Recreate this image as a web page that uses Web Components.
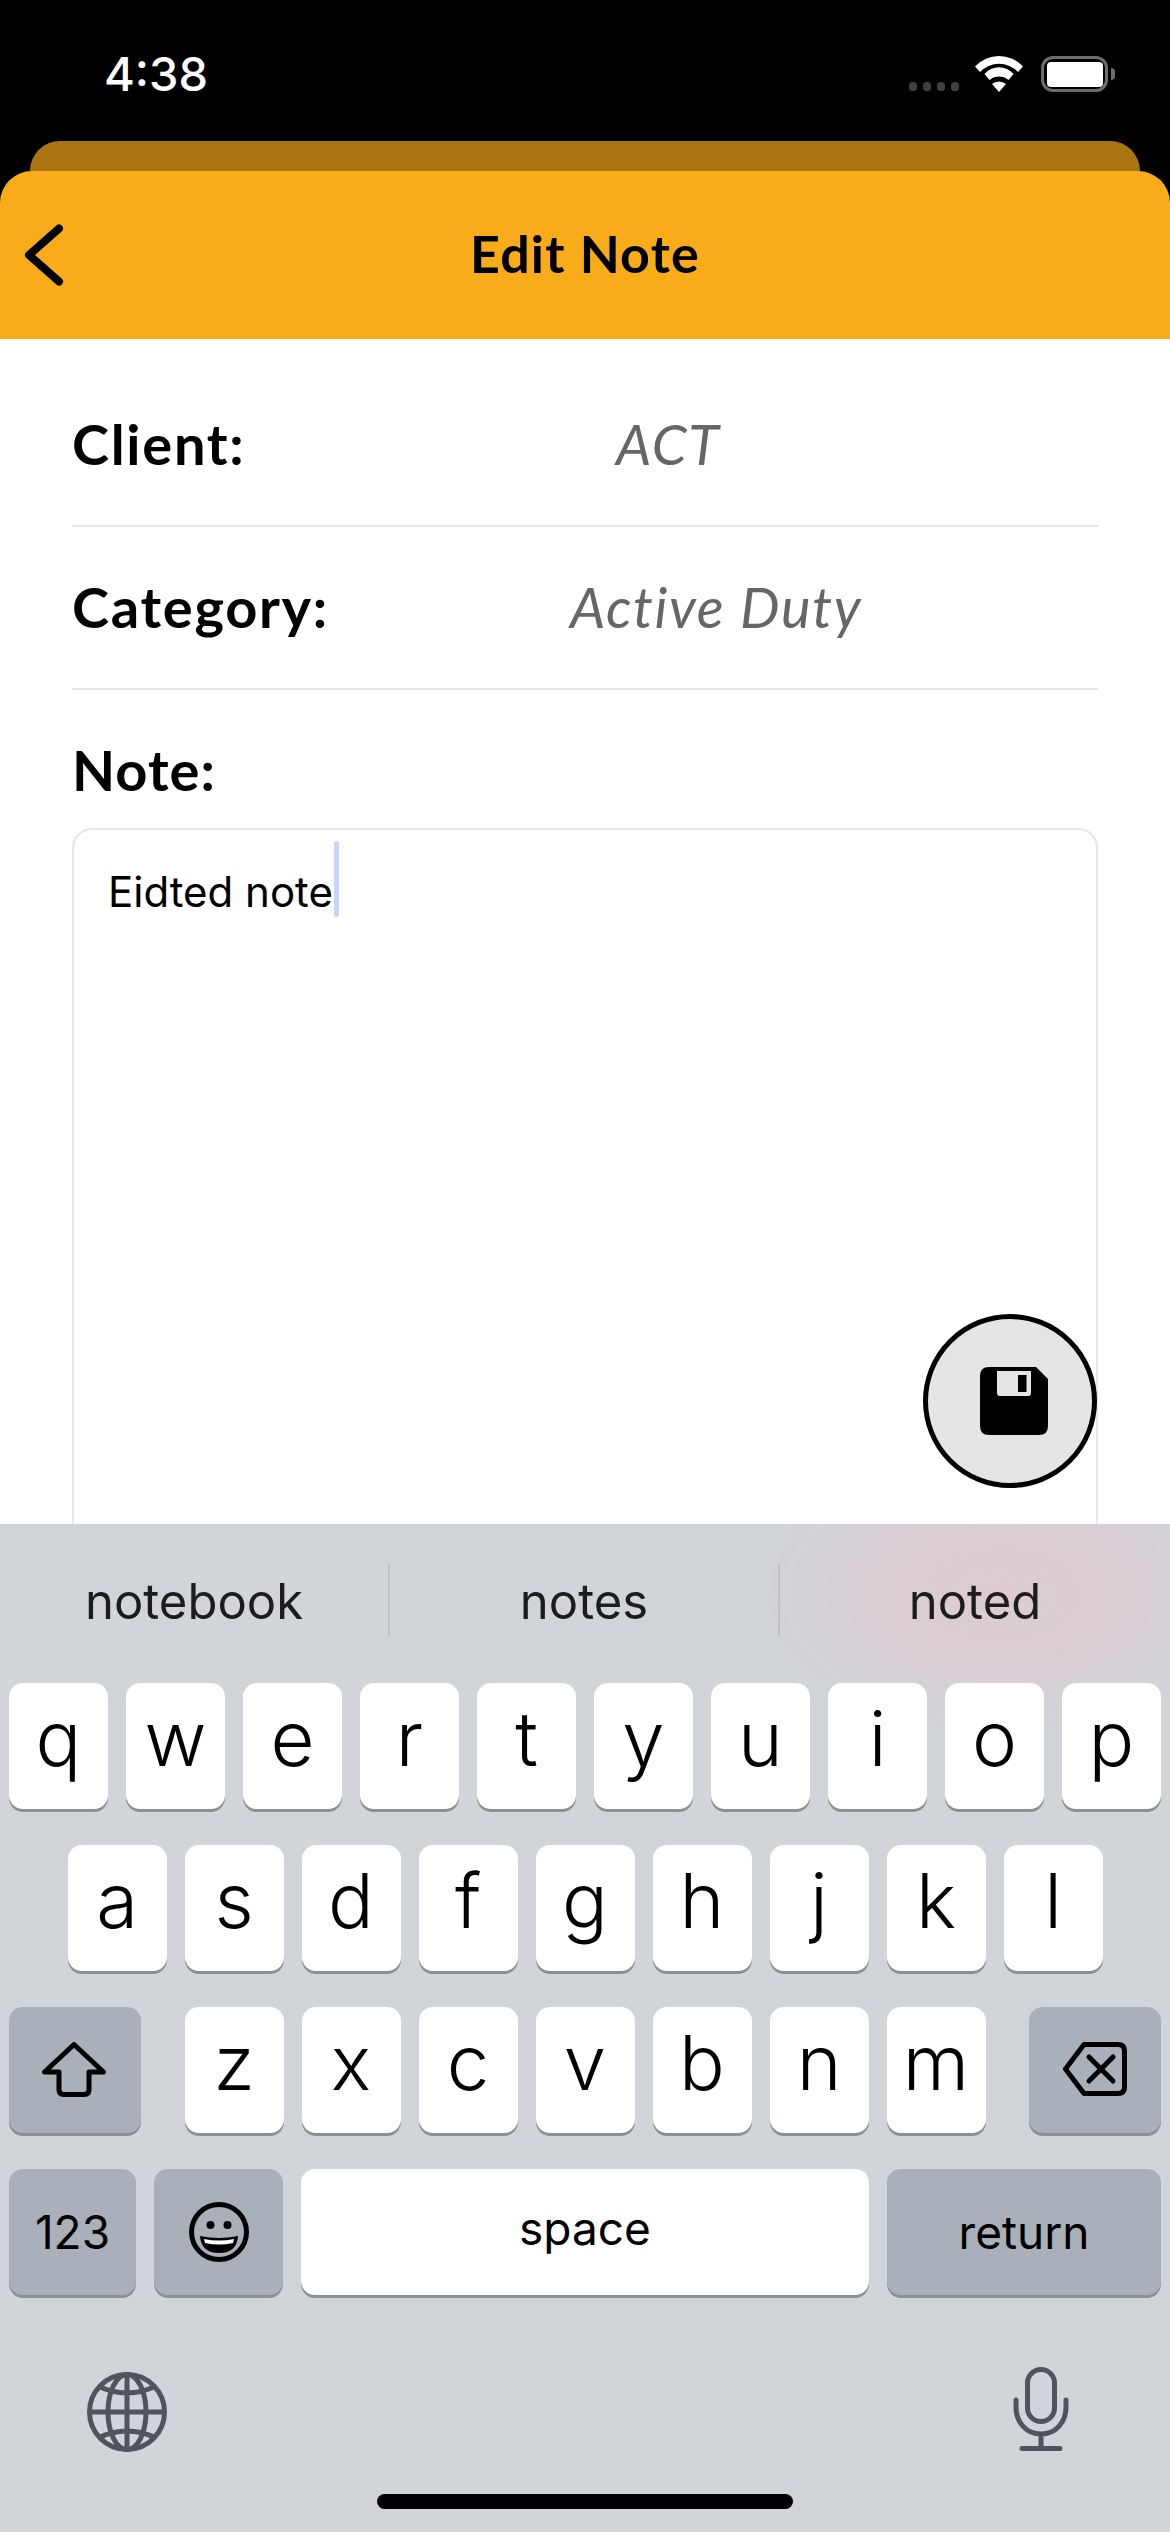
<!DOCTYPE html>
<html lang="en">
<head>
<meta charset="utf-8">
<title>Edit Note</title>
<style>
html,body{margin:0;padding:0;background:#000}
body{width:1170px;height:2532px;overflow:hidden}
</style>
</head>
<body>
<note-app>
  <ios-status slot="status" time="4:38"></ios-status>
  <sheet-header slot="header" title="Edit Note"></sheet-header>
  <note-form slot="form">
    <note-row label="Client:" value="ACT" style="--value-x:544px"></note-row>
    <note-row label="Category:" value="Active Duty" style="--value-x:498px"></note-row>
    <note-box label="Note:" text="Eidted note"></note-box>
    <save-fab></save-fab>
  </note-form>
  <ios-keyboard slot="keyboard"></ios-keyboard>
</note-app>
<script>
function def(name, css, html, init){
  customElements.define(name, class extends HTMLElement{
    constructor(){super();this.attachShadow({mode:'open'}).innerHTML='<style>'+css+'</style>'+html;}
    connectedCallback(){if(init)init(this,this.shadowRoot);}
  });
}
var UI='"Lato","Noto Sans",sans-serif', KB='"Inter","Liberation Sans",sans-serif';

def('note-app',
 ':host{display:flex;flex-direction:column;width:1170px;height:2532px;background:#000;overflow:hidden}',
 '<slot name="status"></slot><slot name="header"></slot><slot name="form"></slot><slot name="keyboard"></slot>');

def('ios-status',
 ':host{display:flex;justify-content:space-between;align-items:flex-start;height:141px;box-sizing:border-box;padding:56px 55px 0 104px;color:#fff;font:500 47px/36px '+KB+'}'+
 '.r{display:flex;align-items:flex-start}'+
 '.dots{display:flex;gap:5.5px;margin:26px 16px 0 0}.dots i{width:8.5px;height:9px;border-radius:3.5px;background:#3f3f3f}'+
 'svg{display:block}.wifi{margin-right:18px}'+
 '.bat{box-sizing:border-box;width:67px;height:36px;border:3.5px solid #6c6c6c;border-radius:12px;padding:2.5px;}'+
 '.bat b{display:block;height:100%;background:#fff;border-radius:4px}'+
 '.cap{width:4px;height:12px;margin:12px 0 0 3px;background:#6c6c6c;border-radius:0 6px 6px 0}',
 '<span id="t"></span><div class="r"><div class="dots"><i></i><i></i><i></i><i></i></div>'+
 '<svg class="wifi" width="48" height="36" viewBox="0 0 48 36" fill="#fff"><path d="M0 10.5A32.7 32.7 0 0 1 48 10.5L43 16A26 26 0 0 0 5 16Z"/><path d="M9.5 18A19 19 0 0 1 38.5 18L33.5 24A15 15 0 0 0 14.5 24Z"/><path d="M17 28A11 11 0 0 1 31 28L24 36Z"/></svg>'+
 '<div class="bat"><b></b></div><div class="cap"></div></div>',
 function(h,s){s.getElementById('t').textContent=h.getAttribute('time');});

def('sheet-header',
 ':host{display:block}'+
 '.back{height:30px;margin:0 30px;background:#ab7611;border-radius:30px 30px 0 0}'+
 '.bar{position:relative;display:flex;align-items:center;justify-content:center;height:168px;box-sizing:border-box;padding-bottom:5px;background:#f8ac19;border-radius:32px 32px 0 0;font:700 52px/1 '+UI+';letter-spacing:1.2px;color:#000}'+
 'button{all:unset;position:absolute;left:24px;top:53px;display:block}svg{display:block}',
 '<div class="back"></div><div class="bar"><button aria-label="Back"><svg width="42" height="62" viewBox="0 0 42 62" fill="none" stroke="#000" stroke-width="8" stroke-linecap="round" stroke-linejoin="round"><path d="M35 4.5L5 31L35 57.5"/></svg></button><span id="t"></span></div>',
 function(h,s){s.getElementById('t').textContent=h.getAttribute('title');});

def('note-form',
 ':host{position:relative;display:flex;flex-direction:column;flex:1;min-height:0;overflow:hidden;background:#fff;padding:25px 72px 0;box-sizing:border-box}',
 '<slot></slot>');

def('note-row',
 ':host{display:flex;align-items:center;height:163px;box-sizing:border-box;border-bottom:2px solid #e6e6e6;padding-bottom:2px;color:#000}'+
 '.l{font:700 56px/1 '+UI+';letter-spacing:1.7px;width:var(--value-x)}.v{font:italic 400 56px/1 '+UI+';letter-spacing:1.6px;color:#666}',
 '<span class="l" id="l"></span><span class="v" id="v"></span>',
 function(h,s){s.getElementById('l').textContent=h.getAttribute('label');s.getElementById('v').textContent=h.getAttribute('value');});

def('note-box',
 ':host{display:flex;flex-direction:column;flex:1;min-height:0}'+
 '.l{font:700 56px/1 '+UI+';letter-spacing:1px;padding-top:52px;height:86px;color:#000;box-sizing:content-box}'+
 '.box{flex:1;border:2px solid #e6e6e6;border-bottom:0;border-radius:20px 20px 0 0;padding:11px 34px;display:block}'+
 '.line{display:flex;align-items:center;height:76px;font:400 42px/1 '+KB+';color:#000}'+
 '.line span:first-child{padding-top:26px}'+
 '.c{width:5px;height:76px;background:#c9d4fa;border-radius:2.5px;flex:none;margin-left:1px}',
 '<div class="l" id="l"></div><div class="box"><div class="line"><span id="t"></span><span class="c"></span></div></div>',
 function(h,s){s.getElementById('l').textContent=h.getAttribute('label');s.getElementById('t').textContent=h.getAttribute('text');});

def('save-fab',
 ':host{position:absolute;left:923px;top:975px;width:174px;height:174px;box-sizing:border-box;border:5px solid #000;border-radius:50%;background:#e5e5e5;display:flex;align-items:center;justify-content:center}svg{display:block;margin-left:8px}',
 '<svg width="68" height="68" viewBox="0 0 68 68" role="img" aria-label="Save"><path fill="#000" d="M9 0H56L68 12V59Q68 68 59 68H9Q0 68 0 59V9Q0 0 9 0Z"/><path fill="#e5e5e5" d="M17 4H51V26Q51 29 48 29H20Q17 29 17 26Z"/><rect x="38" y="8" width="8.5" height="17" fill="#000"/></svg>');

def('kb-key',
 ':host{display:flex;align-items:center;justify-content:center;width:99px;height:126px;flex:none;background:#fff;border-radius:14px;box-shadow:0 3px 0 #8e8f93;color:#000;font:300 76px/1 '+KB+';box-sizing:border-box;padding-bottom:17px}'+
 ':host([kind=dark]){background:#a9b0ba}'+
 ':host([small]){font:400 46px/1 '+KB+';padding-bottom:0}',
 '<slot></slot>');

def('kb-row',
 ':host{display:flex;justify-content:center;gap:18px;height:126px}',
 '<slot></slot>');

def('ios-keyboard',
 ':host{display:flex;flex-direction:column;height:1008px;flex:none;box-sizing:border-box;background:radial-gradient(ellipse 240px 140px at 1000px 70px,#ddcbd2 0%,rgba(221,203,210,.75) 45%,rgba(209,212,217,0) 100%),#d1d4d9}'+
 '.sug{display:grid;grid-template-columns:388px 390px 392px;grid-template-rows:74px;height:74px;margin:39px 0 46px;font:400 49px/77px '+KB+';color:#1c1c1e;text-align:center}'+
 '.sug span+span{border-left:2px solid #bfc2c8;box-sizing:border-box}'+
 '.rows{display:flex;flex-direction:column;gap:36px}'+
 '.sp{justify-content:space-between;padding:0 9px}.grp{display:flex;gap:18px}'+
 '.bot{display:flex;justify-content:space-between;align-items:flex-start;padding:72px 101px 0 87px}'+
 '.home{width:416px;height:15px;border-radius:8px;background:#000;margin:42px auto 0}svg{display:block}',
 '<div class="sug"><span>notebook</span><span>notes</span><span>noted</span></div>'+
 '<div class="rows">'+
 '<kb-row>'+'qwertyuiop'.split('').map(function(c){return '<kb-key>'+c+'</kb-key>'}).join('')+'</kb-row>'+
 '<kb-row>'+'asdfghjkl'.split('').map(function(c){return '<kb-key>'+c+'</kb-key>'}).join('')+'</kb-row>'+
 '<kb-row class="sp"><kb-key kind="dark" style="width:132px;padding:0 3px 0 0"><svg style="margin-bottom:2px" width="64" height="55" viewBox="0 0 64 55" fill="none" stroke="#000" stroke-width="5" stroke-linejoin="round"><path d="M32 2.5L2.5 30H17V47.5Q17 52.5 22 52.5H42Q47 52.5 47 47.5V30H61.5Z"/></svg></kb-key>'+
 '<div class="grp">'+'zxcvbnm'.split('').map(function(c){return '<kb-key>'+c+'</kb-key>'}).join('')+'</div>'+
 '<kb-key kind="dark" style="width:132px;padding:0"><svg style="margin-bottom:2px" width="64" height="54" viewBox="0 0 64 54" fill="none" stroke="#000" stroke-width="5" stroke-linejoin="round" stroke-linecap="round"><path d="M21 2.5H55Q61.5 2.5 61.5 9V45Q61.5 51.5 55 51.5H21L2.5 27Z"/><path d="M26 15L50 39M50 15L26 39"/></svg></kb-key></kb-row>'+
 '<kb-row class="sp"><kb-key kind="dark" small style="width:127px">123</kb-key>'+
 '<kb-key kind="dark" style="width:129px;padding:0"><svg width="60" height="60" viewBox="-30 -30 60 60"><circle r="27.5" fill="none" stroke="#000" stroke-width="5"/><circle cx="-8.5" cy="-7" r="4" fill="#000"/><circle cx="8.5" cy="-7" r="4" fill="#000"/><path d="M-19 4Q0 8 19 4Q18 21 0 21Q-18 21 -19 4Z" fill="#000"/><path d="M-15 7Q0 10 15 7L14 11Q0 14 -14 11Z" fill="#fff"/></svg></kb-key>'+
 '<kb-key small style="width:568px;padding-bottom:8px">space</kb-key>'+
 '<kb-key kind="dark" small style="width:274px">return</kb-key></kb-row>'+
 '</div>'+
 '<div class="bot"><svg style="margin-top:5px" width="80" height="80" viewBox="-40 -40 80 80" fill="none" stroke="#50555c" stroke-width="5"><circle r="37.5"/><ellipse rx="19" ry="37.5"/><path d="M0 -37.5V37.5M-37.5 0H37.5M-29 -26Q0 -12 29 -26M-29 26Q0 12 29 26"/></svg>'+
 '<svg width="56" height="84" viewBox="0 0 56 84" fill="none" stroke="#50555c" stroke-width="5" stroke-linecap="round"><rect x="14.5" y="2.5" width="27" height="52" rx="13.5"/><path d="M3 33V40C3 55 13 67 28 67S53 55 53 40V33M28 67V81M9 81.5H47"/></svg></div>'+
 '<div class="home"></div>');
</script>
</body>
</html>
